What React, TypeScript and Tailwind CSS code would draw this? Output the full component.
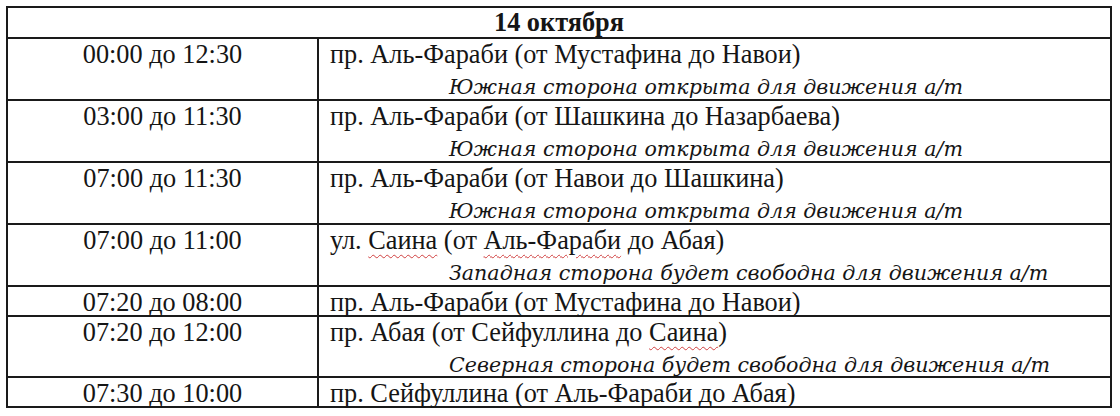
const rows = [
  {
    time: "00:00 до 12:30",
    street: "пр. Аль-Фараби (от Мустафина до Навои)",
    note: "Южная сторона открыта для движения а/т",
    h: "h-[62px]",
  },
  {
    time: "03:00 до 11:30",
    street: "пр. Аль-Фараби (от Шашкина до Назарбаева)",
    note: "Южная сторона открыта для движения а/т",
    h: "h-[62px]",
  },
  {
    time: "07:00 до 11:30",
    street: "пр. Аль-Фараби (от Навои до Шашкина)",
    note: "Южная сторона открыта для движения а/т",
    h: "h-[62px]",
  },
  {
    time: "07:00 до 11:00",
    street: (
      <>
        ул. <Typo>Саина</Typo> (от <Typo>Аль-Фараби</Typo> до Абая)
      </>
    ),
    note: "Западная сторона будет свободна для движения а/т",
    h: "h-[62px]",
  },
  {
    time: "07:20 до 08:00",
    street: "пр. Аль-Фараби (от Мустафина до Навои)",
    h: "h-[30px]",
  },
  {
    time: "07:20 до 12:00",
    street: (
      <>
        пр. Абая (от Сейфуллина до <Typo>Саина</Typo>)
      </>
    ),
    note: "Северная сторона будет свободна для движения а/т",
    h: "h-[61px]",
  },
  {
    time: "07:30 до 10:00",
    street: "пр. Сейфуллина (от Аль-Фараби до Абая)",
    h: "h-[30px]",
  },
];

function Typo({ children }: { children: React.ReactNode }) {
  return (
    <span className="underline decoration-wavy decoration-[#d04040] decoration-1 underline-offset-[5px]">
      {children}
    </span>
  );
}

export default function App() {
  return (
    <div className="w-[1120px] h-[416px] bg-white pt-[6px] pl-[6px] font-['Liberation_Serif',serif] text-[26.3px] leading-[28px] text-[#151515]">
      <div className="w-[1106px] border-2 border-[#1a1a1a]">
        <div className="text-center font-bold h-[29px] leading-[29px]">14 октября</div>
        {rows.map((r, i) => (
          <div
            key={i}
            className={`grid grid-cols-[311px_1fr] grid-rows-1 border-t-2 border-[#1a1a1a] ${r.h}`}
          >
            <div className="text-center border-r-2 border-[#1a1a1a] pt-[2px]">{r.time}</div>
            <div className="pl-[11px] pt-[2px]">
              <div>{r.street}</div>
              {r.note && (
                <div className="pl-[119px] mt-[6px] leading-[24px] italic text-[20.6px] font-['DejaVu_Serif',serif]">
                  {r.note}
                </div>
              )}
            </div>
          </div>
        ))}
      </div>
    </div>
  );
}
